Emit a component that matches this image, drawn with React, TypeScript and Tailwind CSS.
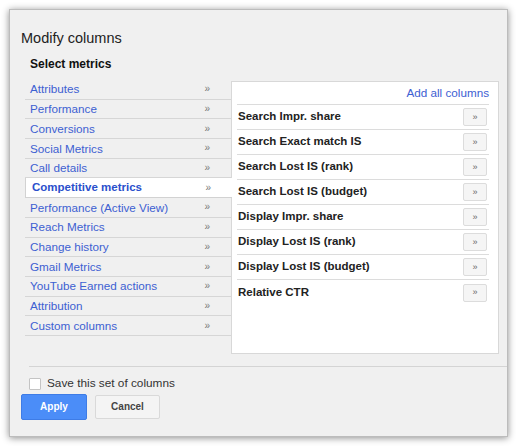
import React from "react";

const categories = [
  "Attributes",
  "Performance",
  "Conversions",
  "Social Metrics",
  "Call details",
  "Competitive metrics",
  "Performance (Active View)",
  "Reach Metrics",
  "Change history",
  "Gmail Metrics",
  "YouTube Earned actions",
  "Attribution",
  "Custom columns",
];

const metrics = [
  "Search Impr. share",
  "Search Exact match IS",
  "Search Lost IS (rank)",
  "Search Lost IS (budget)",
  "Display Impr. share",
  "Display Lost IS (rank)",
  "Display Lost IS (budget)",
  "Relative CTR",
];

export default function App() {
  return (
    <div
      className="w-[517px] h-[448px] bg-white pt-[9px] pl-[9px]"
      style={{ fontFamily: '"Liberation Sans", Arial, sans-serif' }}
    >
      <div className="w-[499px] h-[428px] bg-[#f0f0f0] border border-[#bcbcbc] shadow-[0_1px_7px_rgba(0,0,0,0.45)] pt-[19px]">
        <div className="pl-[11px] text-[14.5px] leading-[18px] text-[#222]">Modify columns</div>
        <div className="pl-[20px] mt-[10px] text-[12px] leading-[14px] font-bold text-[#111]">Select metrics</div>

        <div className="flex items-start pl-[15px] mt-[9px]">
          <div className="w-[206px] flex flex-col">
            {categories.map((c) => {
              const active = c === "Competitive metrics";
              return active ? (
                <div
                  key={c}
                  className="relative z-10 w-[207px] h-[19.7px] bg-white border-b border-l border-[#d2d2d2] flex items-center justify-between pl-[6px] pr-[21px]"
                >
                  <span className="text-[11.5px] font-bold text-[#2a4fcc] leading-none">{c}</span>
                  <span className="text-[10px] text-[#777] leading-none">»</span>
                </div>
              ) : (
                <div
                  key={c}
                  className="h-[19.7px] border-b border-[#d6d6d6] flex items-center justify-between pl-[5px] pr-[21px]"
                >
                  <span className="text-[11.7px] text-[#3d60d2] leading-none">{c}</span>
                  <span className="text-[10px] text-[#777] leading-none">»</span>
                </div>
              );
            })}
          </div>

          <div className="mt-px w-[268px] h-[273px] bg-white border border-[#d8d8d8] pl-[5px] pr-[9px]">
            <div className="h-[23px] border-b border-[#dcdcdc] flex items-center justify-end">
              <span className="text-[11.7px] text-[#3d60d2] leading-none">Add all columns</span>
            </div>
            {metrics.map((m, i) => (
              <div
                key={m}
                className={
                  "h-[25px] flex items-center justify-between pl-px " +
                  (i < metrics.length - 1 ? "border-b border-[#dcdcdc]" : "")
                }
              >
                <span className="text-[11.5px] font-bold text-[#222] leading-none">{m}</span>
                <div className="w-[24px] h-[18px] bg-[#f5f5f5] border border-[#dcdcdc] rounded-[2px] flex items-center justify-center mr-[2px]">
                  <span className="text-[9px] text-[#666] leading-none">»</span>
                </div>
              </div>
            ))}
          </div>
        </div>

        <div className="ml-[19px] mt-[12px] border-t border-[#d4d4d4]" />

        <div className="flex items-center ml-[19px] mt-[10px] h-[14px]">
          <div className="w-[12px] h-[12px] bg-white border border-[#c4c4c4] rounded-[1px]" />
          <span className="ml-[6px] text-[11.8px] text-[#333] leading-none">Save this set of columns</span>
        </div>

        <div className="flex items-center ml-[11px] mt-[3px]">
          <div className="w-[66px] h-[26px] bg-[#4b8df8] border border-[#3e7ce6] rounded-[2px] flex items-center justify-center">
            <span className="text-[10px] font-bold text-white leading-none">Apply</span>
          </div>
          <div className="ml-[8px] w-[65px] h-[24px] bg-[#f4f4f4] border border-[#d9d9d9] rounded-[2px] flex items-center justify-center">
            <span className="text-[10px] font-bold text-[#444] leading-none">Cancel</span>
          </div>
        </div>
      </div>
    </div>
  );
}
